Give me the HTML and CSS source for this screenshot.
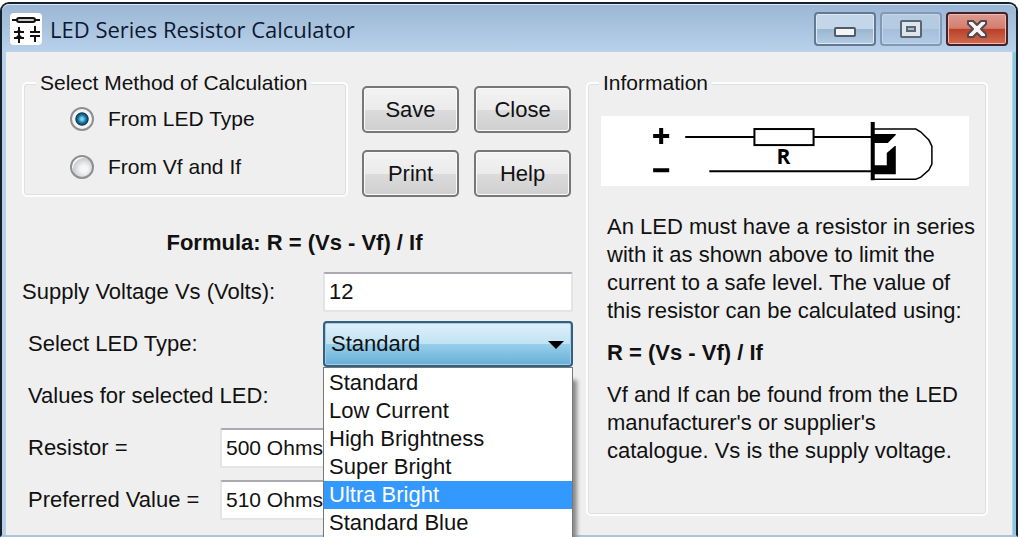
FILE: index.html
```html
<!DOCTYPE html>
<html lang="en">
<head>
    <meta charset="UTF-8">
    <meta name="viewport" content="width=device-width, initial-scale=1.0">
    <title>LED Series Resistor Calculator</title>
    <link rel="stylesheet" href="styles.css">
</head>
<body>
    <div class="window">
        <header class="titlebar">
            <svg class="app-icon" width="32" height="32" viewBox="0 0 32 32" aria-hidden="true">
                <rect width="32" height="32" rx="4" fill="#fff"/>
                <g fill="none" stroke="#111" stroke-width="2">
                    <path d="M2 7h5M25 7h5"/>
                    <rect x="7" y="5" width="18" height="4" rx="2" fill="#ccc"/>
                    <path d="M9 14v16M4 19h10M4 25h10M20 19h10M20 23h10M25 13v6M25 23v6"/>
                </g>
                <path d="M6 19l3-3 3 3zM5 25l4-4 4 4z" fill="#111"/>
            </svg>
            <h1>LED Series Resistor Calculator</h1>
            <div class="window-buttons">
                <button type="button" class="win-btn" aria-label="Minimize">
                    <svg width="24" height="20" viewBox="0 0 24 20"><rect x="2" y="9" width="20" height="8" rx="1" fill="#f4f4f4" stroke="#4f5b68" stroke-width="2"/></svg>
                </button>
                <button type="button" class="win-btn maximize" aria-label="Maximize">
                    <svg width="24" height="20" viewBox="0 0 24 20"><rect x="2" y="2" width="20" height="16" rx="1" fill="#dfe5ec" stroke="#596673" stroke-width="2"/><rect x="8" y="8" width="8" height="4" fill="#a9bdd3" stroke="#596673" stroke-width="2"/></svg>
                </button>
                <button type="button" class="win-btn close" aria-label="Close window">
                    <svg width="24" height="20" viewBox="0 0 24 20"><path d="M3 2h5l4 4 4-4h5v3l-5 5 5 5v3h-5l-4-4-4 4H3v-3l5-5-5-5z" fill="#f5f5f5" stroke="#54484e" stroke-width="2" stroke-linejoin="round"/></svg>
                </button>
            </div>
        </header>

        <main class="content">
            <form class="calculator">
                <div class="top-row">
                    <fieldset class="group method">
                        <legend>Select Method of Calculation</legend>
                        <label><input type="radio" name="method" checked> From LED Type</label>
                        <label><input type="radio" name="method"> From Vf and If</label>
                    </fieldset>
                    <div class="actions">
                        <button type="button">Save</button>
                        <button type="button">Close</button>
                        <button type="button">Print</button>
                        <button type="button">Help</button>
                    </div>
                </div>

                <p class="formula">Formula: R = (Vs - Vf) / If</p>

                <div class="field first">
                    <label for="supply">Supply Voltage Vs (Volts):</label>
                    <input type="text" id="supply" value="12">
                </div>
                <div class="field">
                    <label for="led-type">Select LED Type:</label>
                    <div class="combo">
                        <select id="led-type">
                            <option>Standard</option>
                            <option>Low Current</option>
                            <option>High Brightness</option>
                            <option>Super Bright</option>
                            <option>Ultra Bright</option>
                            <option>Standard Blue</option>
                        </select>
                        <svg class="arrow" width="16" height="8" viewBox="0 0 16 8" aria-hidden="true"><path d="M0 0h16L8 8z"/></svg>
                        <ul class="options" role="listbox" aria-label="LED types">
                            <li role="option">Standard</li>
                            <li role="option">Low Current</li>
                            <li role="option">High Brightness</li>
                            <li role="option">Super Bright</li>
                            <li role="option" class="active" aria-selected="true">Ultra Bright</li>
                            <li role="option">Standard Blue</li>
                        </ul>
                    </div>
                </div>
                <div class="field">
                    <span>Values for selected LED:</span>
                </div>
                <div class="field result">
                    <label for="resistor">Resistor =</label>
                    <input type="text" id="resistor" value="500 Ohms" readonly>
                </div>
                <div class="field result">
                    <label for="preferred">Preferred Value =</label>
                    <input type="text" id="preferred" value="510 Ohms" readonly>
                </div>
            </form>

            <fieldset class="group info">
                <legend>Information</legend>
                <svg class="diagram" viewBox="0 0 367 70" role="img" aria-label="LED with series resistor">
                    <rect width="367" height="70" fill="#fff"/>
                    <path d="M52 20h16M60 12v16M52 54h16" stroke="#000" stroke-width="4"/>
                    <g fill="none" stroke="#000" stroke-width="2">
                        <path d="M84 21h69M212 21h58M108 55h162"/>
                        <rect x="153" y="13" width="59" height="16"/>
                        <path d="M270 13h44l5 3 8 8 3 6v18l-3 6-8 7-5 2h-44" stroke-width="1.5"/>
                    </g>
                    <path d="M269 6h4v12h21v1l-8 8h-13v22h12V37l8-7h1v28h-21v6h-4z"/>
                    <text x="182" y="48" text-anchor="middle">R</text>
                </svg>
                <div class="info-text">
                    <p>An LED must have a resistor in series with it as shown above to limit the current to a safe level. The value of this resistor can be calculated using:</p>
                    <p><strong>R = (Vs - Vf) / If</strong></p>
                    <p>Vf and If can be found from the LED manufacturer's or supplier's catalogue. Vs is the supply voltage.</p>
                </div>
            </fieldset>
        </main>
    </div>
</body>
</html>
```
FILE: styles.css
```css
* {
    box-sizing: border-box;
}
body {
    margin: 0;
    height: 100vh;
    overflow: hidden;
    background: #fff;
    color: #111;
    font-family: "Liberation Sans", Arial, sans-serif;
    font-size: 22px;
    line-height: 28px;
}
button, input, select {
    font: inherit;
    color: inherit;
}

/* window frame */
.window {
    display: flex;
    flex-direction: column;
    min-height: calc(100vh - 2px);
    margin: 2px 2px 0 0;
    border: 2px solid #14202c;
    border-bottom: 2px solid #a9c4dc;
    border-radius: 9px 9px 0 0;
    background: #b9d0e8;
    box-shadow: inset -3px 0 #8cc8e2;
}
.titlebar {
    display: flex;
    align-items: center;
    height: 48px;
    padding: 0 8px;
    border-top: 1px solid #dfeaf5;
    border-radius: 7px 7px 0 0;
    background: linear-gradient(#9bb7d5, #b9d1ea);
}
.titlebar h1 {
    flex: 1;
    margin: 0 0 0 8px;
    font-family: "Open Sans", "Noto Sans", sans-serif;
    font-size: 22px;
    font-weight: 400;
    color: #0c1830;
}
.window-buttons {
    display: flex;
    gap: 4px;
}
.win-btn {
    display: flex;
    align-items: center;
    justify-content: center;
    width: 62px;
    height: 34px;
    padding: 0;
    border: 2px solid #64788f;
    border-radius: 4px;
    background: linear-gradient(#c4d6e9 50%, #9bb5d1 50%, #b4cce4);
    box-shadow: inset 0 0 0 1px #dce8f4;
}
.win-btn.maximize {
    border-color: #8299b5;
    background: linear-gradient(#b5cbe2 50%, #a5bfdb 50%, #b3cbe4);
    box-shadow: inset 0 0 0 1px #c4d6e8;
}
.win-btn.close {
    border-color: #43202c;
    background: linear-gradient(#dd9a8f, #d27d6d 48%, #b93f27 50%, #d06c50);
    box-shadow: inset 0 0 0 1px #ecb9ad;
}

/* client area */
.content {
    flex: 1;
    display: grid;
    grid-template-columns: minmax(0, 551fr) minmax(0, 402fr);
    gap: 13px;
    align-items: start;
    margin: 0 4px;
    padding: 17px 24px 0 16px;
    background: #efefef;
}
.group {
    min-width: 0;
    margin: 0;
    border: 2px solid #fdfdfd;
    border-radius: 5px;
    box-shadow: inset 0 0 0 1px #dbe1e5;
}
.group legend {
    padding: 0 4px;
    background: #efefef;
    font-size: 21px;
}
.top-row {
    display: flex;
    justify-content: space-between;
    padding-right: 2px;
}
.method {
    width: 326px;
    height: 128px;
    padding: 0 0 0 46px;
}
.method legend {
    margin-left: -34px;
}
.method label {
    display: flex;
    align-items: center;
    gap: 14px;
    margin-top: 8px;
    margin-bottom: 20px;
    font-size: 21px;
}
.method label + label {
    margin: 0;
}
.method input {
    appearance: none;
    width: 24px;
    height: 24px;
    margin: 0;
    border: 2px solid #8e8f8f;
    border-radius: 50%;
    background: radial-gradient(circle at 60% 60%, #f6f6f6 20%, #c9cccf 62%, #fafafa 66%);
}
.method input:checked {
    background: radial-gradient(circle at 50% 50%, #7fd3ee 8%, #1f7fa8 26%, #0c3557 44%, #f4f4f4 50%);
}
.actions {
    display: grid;
    grid-template-columns: 97px 97px;
    grid-auto-rows: 47px;
    gap: 17px 15px;
    padding-top: 17px;
}
.actions button {
    padding: 0;
    border: 2px solid #777;
    border-radius: 5px;
    background: linear-gradient(#f3f3f3, #ebebeb 50%, #dcdcdc 50%, #cfcfcf);
    box-shadow: inset 0 0 0 1px #fafafa;
}
.formula {
    margin: 32px 0 9px;
    padding-right: 6px;
    text-align: center;
    font-weight: 700;
}

/* form rows */
.field {
    display: grid;
    grid-template-columns: 295px 1fr;
    align-items: center;
    height: 52px;
    padding-left: 6px;
}
.field.first {
    grid-template-columns: 301px 1fr;
    padding-left: 0;
}
.field.result {
    grid-template-columns: 192px 1fr;
}
.field input {
    width: 100%;
    height: 40px;
    padding: 0 4px;
    border: 2px solid #e2e4e8;
    border-top-color: #a9abb0;
    border-radius: 2px;
    background: #fff;
}
.field.result input {
    font-size: 21px;
}
.combo {
    position: relative;
}
.combo select {
    appearance: none;
    display: block;
    width: 100%;
    height: 46px;
    padding: 0 6px;
    border: 2px solid #33607f;
    border-radius: 4px;
    background: linear-gradient(#e0f1fa, #c0e2f3 50%, #98d0ec 50%, #68aed6);
    box-shadow: inset 0 0 0 1px #a6cfe2;
}
.arrow {
    position: absolute;
    top: 20px;
    right: 9px;
    pointer-events: none;
}
.options {
    position: absolute;
    top: 100%;
    left: 0;
    right: 0;
    z-index: 1;
    margin: 0;
    padding: 1px 0;
    border: 1px solid #777;
    background: #fff;
    box-shadow: 5px 12px 4px -1px #8b8b8b;
    list-style: none;
}
.options li {
    padding: 0 5px;
}
.options .active {
    background: #3399ff;
    color: #fff;
}

/* information panel */
.info {
    height: 447px;
    padding: 19px 17px 0 13px;
}
.info legend {
    margin-left: -2px;
}
.diagram {
    display: block;
    width: 100%;
}
.diagram text {
    font: 700 21px "Open Sans", sans-serif;
}
.info-text {
    margin-right: -10px;
    padding: 27px 0 0 6px;
}
.info-text p {
    margin: 0 0 14px;
}
```
